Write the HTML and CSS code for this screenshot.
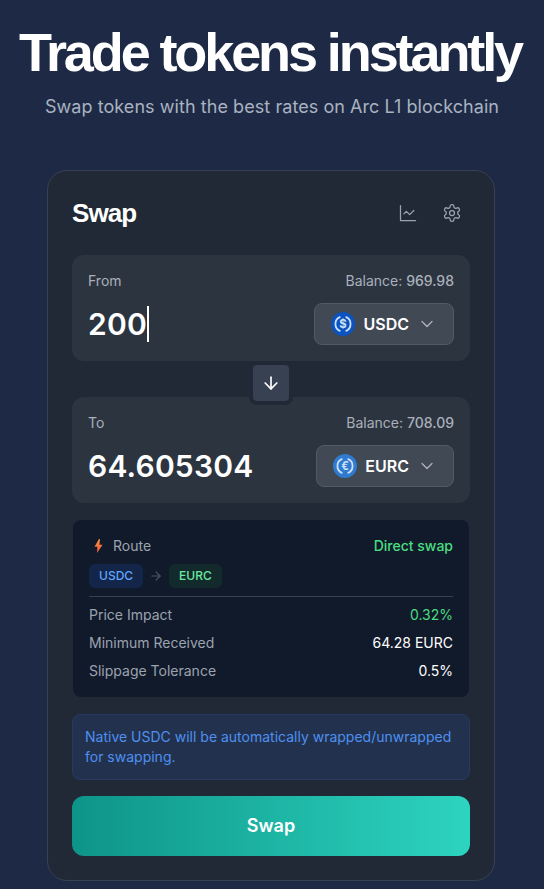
FILE: index.html
```html
<!DOCTYPE html>
<html lang="en">
<head>
    <meta charset="UTF-8">
    <meta name="viewport" content="width=device-width, initial-scale=1.0">
    <title>Swap</title>
    <link rel="stylesheet" href="styles.css">
</head>
<body>

    <!-- Hero -->
    <header class="hero">
        <h1>Trade tokens instantly</h1>
        <p>Swap tokens with the best rates on Arc L1 blockchain</p>
    </header>

    <main class="card">
        <div class="card-head">
            <h2>Swap</h2>
            <div class="card-tools">
                <svg class="tool-icon" viewBox="0 0 24 24"><path d="M3 3v18h18"/><path d="m19 9-5 5-4-4-3 3"/></svg>
                <svg class="tool-icon" viewBox="0 0 24 24"><path d="M12.22 2h-.44a2 2 0 0 0-2 2v.18a2 2 0 0 1-1 1.73l-.43.25a2 2 0 0 1-2 0l-.15-.08a2 2 0 0 0-2.73.73l-.22.38a2 2 0 0 0 .73 2.73l.15.1a2 2 0 0 1 1 1.72v.51a2 2 0 0 1-1 1.74l-.15.09a2 2 0 0 0-.73 2.73l.22.38a2 2 0 0 0 2.73.73l.15-.08a2 2 0 0 1 2 0l.43.25a2 2 0 0 1 1 1.73V20a2 2 0 0 0 2 2h.44a2 2 0 0 0 2-2v-.18a2 2 0 0 1 1-1.73l.43-.25a2 2 0 0 1 2 0l.15.08a2 2 0 0 0 2.73-.73l.22-.39a2 2 0 0 0-.73-2.73l-.15-.08a2 2 0 0 1-1-1.74v-.5a2 2 0 0 1 1-1.74l.15-.09a2 2 0 0 0 .73-2.73l-.22-.38a2 2 0 0 0-2.73-.73l-.15.08a2 2 0 0 1-2 0l-.43-.25a2 2 0 0 1-1-1.73V4a2 2 0 0 0-2-2z"/><circle cx="12" cy="12" r="3"/></svg>
            </div>
        </div>

        <!-- From -->
        <section class="panel">
            <div class="panel-top">
                <span>From</span>
                <span>Balance: <b>969.98</b></span>
            </div>
            <div class="panel-main">
                <div class="amount">200<i class="caret"></i></div>
                <div class="token-select">
                    <svg class="token-logo" viewBox="0 0 32 32">
                        <circle cx="16" cy="16" r="16" fill="#0b53bf"/>
                        <path class="logo-arc" d="M12.5 6.6a10 10 0 0 0 0 18.8"/>
                        <path class="logo-arc" d="M19.5 6.6a10 10 0 0 1 0 18.8"/>
                        <text class="logo-sign" x="16" y="21.5">$</text>
                    </svg>
                    <span class="token-name">USDC</span>
                    <svg class="chevron" viewBox="0 0 24 24"><path d="m6 9 6 6 6-6"/></svg>
                </div>
            </div>
        </section>

        <div class="flip-row">
            <div class="flip-btn">
                <svg viewBox="0 0 24 24"><path d="M12 5v14"/><path d="m19 12-7 7-7-7"/></svg>
            </div>
        </div>

        <!-- To -->
        <section class="panel">
            <div class="panel-top">
                <span>To</span>
                <span>Balance: <b>708.09</b></span>
            </div>
            <div class="panel-main">
                <div class="amount">64.605304</div>
                <div class="token-select">
                    <svg class="token-logo" viewBox="0 0 32 32">
                        <circle cx="16" cy="16" r="16" fill="#2f7bd0"/>
                        <path class="logo-arc" d="M12.5 6.6a10 10 0 0 0 0 18.8"/>
                        <path class="logo-arc" d="M19.5 6.6a10 10 0 0 1 0 18.8"/>
                        <text class="logo-sign" x="16" y="21.5">€</text>
                    </svg>
                    <span class="token-name">EURC</span>
                    <svg class="chevron" viewBox="0 0 24 24"><path d="m6 9 6 6 6-6"/></svg>
                </div>
            </div>
        </section>

        <!-- Route details -->
        <section class="details">
            <div class="route-head">
                <span class="route-label">
                    <svg class="bolt" viewBox="0 0 16 16">
                        <defs>
                            <linearGradient id="boltFill" x1="0" y1="0" x2="0" y2="1">
                                <stop offset="0" stop-color="#fb923c"/>
                                <stop offset="1" stop-color="#ef5a3c"/>
                            </linearGradient>
                        </defs>
                        <path fill="url(#boltFill)" d="M10 1h1l-.6 5.8h3.1L8 15l.4-6.2H5.5z"/>
                    </svg>
                    Route
                </span>
                <span class="direct">Direct swap</span>
            </div>
            <div class="route-path">
                <span class="chip chip-blue">USDC</span>
                <svg class="route-arrow" viewBox="0 0 24 24"><path d="M5 12h14"/><path d="m12 5 7 7-7 7"/></svg>
                <span class="chip chip-green">EURC</span>
            </div>
            <div class="detail-rows">
                <div class="detail-row"><span>Price Impact</span><span class="val-green">0.32%</span></div>
                <div class="detail-row"><span>Minimum Received</span><span class="val-white">64.28 EURC</span></div>
                <div class="detail-row"><span>Slippage Tolerance</span><span class="val-white">0.5%</span></div>
            </div>
        </section>

        <div class="notice">Native USDC will be automatically wrapped/unwrapped for swapping.</div>

        <button class="swap-btn" type="button">Swap</button>
    </main>

</body>
</html>
```

FILE: styles.css
```css
/* General Body Styling */
body {
    margin: 0;
    min-height: 889px;
    background: #1e2a45;
    color: white;
    font-family: 'Inter', sans-serif;
}

/* Hero */
.hero {
    text-align: center;
    padding-top: 20px;
}

.hero h1 {
    margin: 0;
    padding-right: 4px;
    font-family: 'Liberation Sans', Arial, sans-serif;
    font-size: 54px;
    line-height: 64px;
    font-weight: 700;
    letter-spacing: -3.1px;
    white-space: nowrap;
}

.hero p {
    margin: 11px 0 0;
    font-size: 18px;
    line-height: 24px;
    letter-spacing: 0.06px;
    color: #a9b2c0;
}

/* Card */
.card {
    box-sizing: border-box;
    width: 448px;
    height: 711px;
    margin: 51px 0 0 47px;
    padding: 24px;
    background: #212936;
    border: 1px solid #374151;
    border-radius: 20px;
}

.card-head {
    display: flex;
    justify-content: space-between;
    align-items: center;
    height: 36px;
    margin-bottom: 24px;
}

.card-head h2 {
    margin: 0;
    font-family: 'Liberation Sans', Arial, sans-serif;
    font-size: 26px;
    font-weight: 700;
    letter-spacing: -0.9px;
}

.card-tools {
    display: flex;
    gap: 24px;
    padding-right: 8px;
}

.tool-icon {
    width: 20px;
    height: 20px;
    fill: none;
    stroke: #9ca3af;
    stroke-width: 1.5;
    stroke-linecap: round;
    stroke-linejoin: round;
}

/* From / To panels */
.panel {
    background: #2c3440;
    border-radius: 12px;
    height: 106px;
    box-sizing: border-box;
    padding: 16px;
}

.panel-top {
    display: flex;
    justify-content: space-between;
    font-size: 14px;
    line-height: 20px;
    color: #a9b0bb;
}

.panel-top b {
    font-weight: 500;
}

.panel-main {
    display: flex;
    justify-content: space-between;
    align-items: center;
    margin-top: 12px;
}

.amount {
    display: flex;
    align-items: center;
    font-size: 30px;
    font-weight: 600;
    line-height: 36px;
    letter-spacing: 0.2px;
}

.caret {
    display: block;
    width: 2px;
    height: 36px;
    background: white;
}

.token-select {
    display: flex;
    align-items: center;
    box-sizing: border-box;
    height: 42px;
    padding: 0 16px;
    gap: 8px;
    background: #414955;
    border: 1px solid #525a66;
    border-radius: 8px;
}

.token-logo {
    width: 24px;
    height: 24px;
}

.logo-arc {
    fill: none;
    stroke: #cfe0f7;
    stroke-width: 2.4;
}

.logo-sign {
    font-family: 'Inter', sans-serif;
    font-size: 15px;
    font-weight: 700;
    fill: #cfe0f7;
    text-anchor: middle;
}

.token-name {
    font-size: 16px;
    font-weight: 600;
}

.chevron {
    width: 20px;
    height: 20px;
    fill: none;
    stroke: #aeb4bd;
    stroke-width: 1.5;
    stroke-linecap: round;
    stroke-linejoin: round;
}

/* Flip button */
.flip-row {
    display: flex;
    justify-content: center;
    height: 36px;
}

.flip-btn {
    position: relative;
    z-index: 1;
    display: flex;
    align-items: center;
    justify-content: center;
    box-sizing: border-box;
    width: 36px;
    height: 36px;
    margin-top: 4px;
    background: #374151;
    border-radius: 4px;
    box-shadow: 0 0 0 4px #212936;
}

.flip-btn svg {
    width: 20px;
    height: 20px;
    fill: none;
    stroke: white;
    stroke-width: 2;
    stroke-linecap: round;
    stroke-linejoin: round;
}

/* Route details */
.details {
    box-sizing: border-box;
    height: 177px;
    margin: 17px 1px 0;
    padding: 16px;
    background: #111a2b;
    border-radius: 8px;
    font-size: 14px;
    line-height: 20px;
}

.route-head {
    display: flex;
    justify-content: space-between;
}

.route-label {
    display: flex;
    align-items: center;
    gap: 8px;
    color: #9ca3af;
}

.bolt {
    width: 16px;
    height: 16px;
}

.direct {
    color: #4ade80;
    font-weight: 500;
}

.route-path {
    display: flex;
    align-items: center;
    gap: 6px;
    margin-top: 8px;
}

.chip {
    padding: 2px 10px;
    border-radius: 6px;
    font-size: 12px;
    font-weight: 500;
}

.chip-blue {
    background: #13264a;
    color: #60a5fa;
}

.chip-green {
    background: #122a2b;
    color: #6ee7a0;
}

.route-arrow {
    width: 14px;
    height: 14px;
    fill: none;
    stroke: #4b5563;
    stroke-width: 2;
    stroke-linecap: round;
    stroke-linejoin: round;
}

.detail-rows {
    margin-top: 8px;
    padding-top: 8px;
    border-top: 1px solid #374151;
}

.detail-row {
    display: flex;
    justify-content: space-between;
    height: 28px;
    color: #9ca3af;
}

.val-green {
    color: #4ade80;
}

.val-white {
    color: white;
}

/* Notice */
.notice {
    box-sizing: border-box;
    height: 66px;
    margin-top: 17px;
    padding: 12px;
    background: #22324e;
    border: 1px solid #26395f;
    border-radius: 8px;
    font-size: 14px;
    line-height: 20px;
    color: #4f8ff0;
}

/* Swap button */
.swap-btn {
    display: block;
    width: 100%;
    height: 60px;
    margin-top: 16px;
    padding-bottom: 3px;
    border: none;
    border-radius: 12px;
    background: linear-gradient(to right, #0d9488, #2dd4bf);
    color: white;
    font-family: 'Inter', sans-serif;
    font-size: 18px;
    font-weight: 600;
}
```
